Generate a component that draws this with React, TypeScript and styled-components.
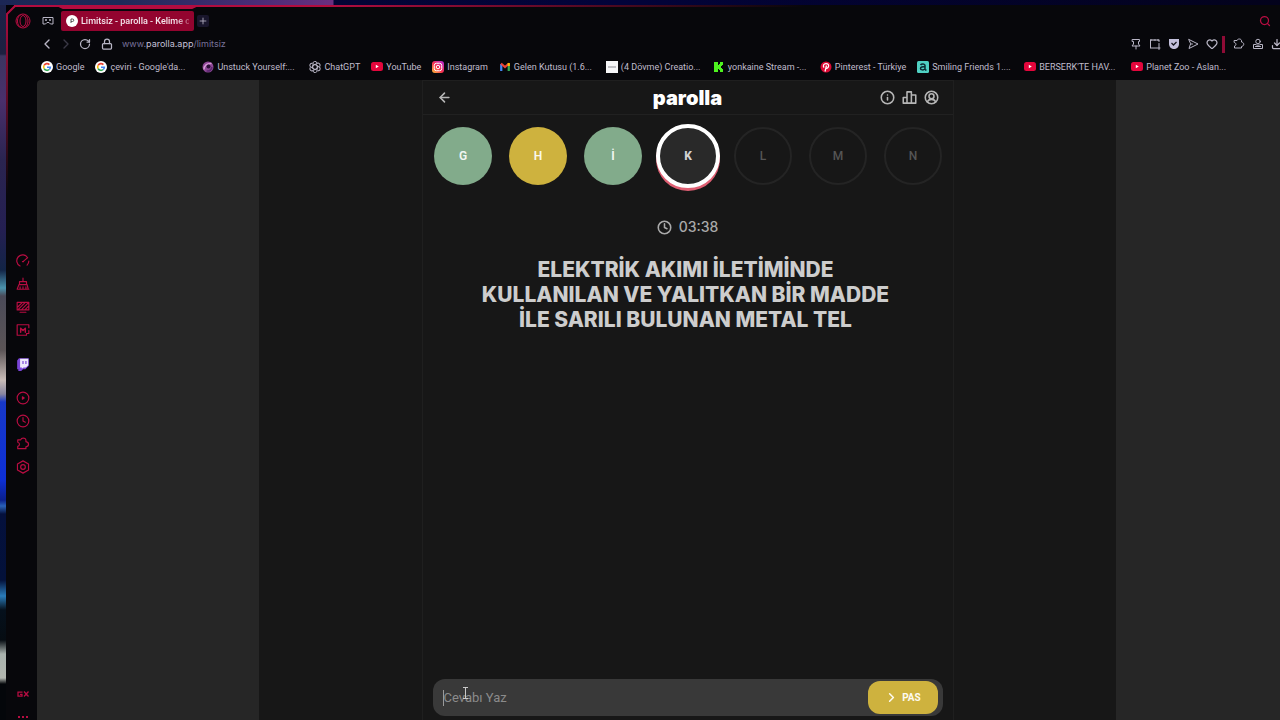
import React from "react";
import styled, { createGlobalStyle, css } from "styled-components";
import {
  ArrowLeft,
  ChevronLeft,
  ChevronRight,
  Clock,
  Download,
  Heart,
  Info,
  Lock,
  Plus,
  RotateCw,
  Search,
} from "lucide-react";

const GlobalStyle = createGlobalStyle`
  *, *::before, *::after { box-sizing: border-box; }
  body {
    margin: 0;
    background: #020208;
    font-family: Inter, Roboto, "Liberation Sans", sans-serif;
  }
  button { border: 0; padding: 0; background: none; color: inherit; font: inherit; cursor: pointer; }
  a { color: inherit; text-decoration: none; }
  svg { display: block; flex: none; }
`;

const Desktop = styled.div`
  display: flex;
  min-height: 100vh;
  padding: 5px 0 0 6px;
  overflow: hidden;
  background:
    linear-gradient(90deg, #1b2655 0, #1d2a58 120px, #4b2c78 260px, #6a2f80 333px, transparent 334px) top / 100% 5px no-repeat,
    linear-gradient(90deg, #04052e 0, #02033a 620px, #03021c 1280px) top / 100% 5px no-repeat,
    linear-gradient(180deg, #1b2148 0, #1d2040 54px, #3b3560 56px, #4a2f6c 100px, #2a2450 160px, #241f52 230px,
      #122446 270px, #4b93ad 288px, #4a4a58 296px, #5b5456 350px, #c9bdb8 380px, #8a86a0 394px, #1738c8 402px,
      #0d2fd6 480px, #0a1f8c 500px, #2a62b8 506px, #04103c 514px, #03113a 580px, #2a7cba 596px, #05101c 610px,
      #060c12 640px, #a9b2ae 654px, #b2b6b0 678px, #04060a 684px) left / 6px 100% no-repeat,
    #020208;
`;

const BrowserWindow = styled.div`
  position: relative;
  display: flex;
  flex: 1;
  min-width: 0;
  background: #07070b;
  clip-path: polygon(0 8px, 8px 0, 100% 0, 100% 100%, 0 100%);
`;

const WindowOutline = styled.svg`
  position: absolute;
  top: 0;
  left: 0;
  width: 100%;
  height: 200px;
  pointer-events: none;
`;

const Sidebar = styled.nav`
  display: flex;
  flex-direction: column;
  align-items: center;
  flex: none;
  width: 31px;
  padding: 8px 0 1px 2px;
  color: #b80d42;
`;

const SidebarPanels = styled.div`
  display: flex;
  flex-direction: column;
  gap: 20px;
  margin-top: 225px;
`;

const SidebarGroup = styled.div`
  display: flex;
  flex-direction: column;
  gap: 9px;
`;

const SidebarFooter = styled.div`
  display: flex;
  flex-direction: column;
  align-items: center;
  gap: 17px;
  margin-top: auto;
`;

const IconButton = styled.button`
  display: flex;
  align-items: center;
  justify-content: center;
`;

const Main = styled.div`
  display: flex;
  flex-direction: column;
  flex: 1;
  min-width: 0;
`;

const TabBar = styled.div`
  display: flex;
  align-items: center;
  height: 26px;
  padding: 6px 9px 0 5px;
  color: #b9b6c6;
`;

const Tab = styled.button`
  display: flex;
  align-items: center;
  gap: 3px;
  width: 133px;
  height: 20px;
  margin: 0 3px 0 7px;
  padding: 0 5px;
  border-radius: 2px;
  background: #93042f;
  color: #f4e6ec;
  font-family: Roboto, Inter, sans-serif;
  font-size: 9px;
  font-weight: 500;
  line-height: 12px;
  text-align: left;
`;

const TabTitle = styled.span`
  flex: 1;
  min-width: 0;
  white-space: nowrap;
  mask-image: linear-gradient(90deg, #000 88%, transparent 105%);
`;

const NewTabButton = styled(IconButton)`
  width: 12px;
  height: 12px;
  border-radius: 2px;
  background: #19162c;
`;

const TabSearch = styled(IconButton)`
  margin-left: auto;
  color: #b80d42;
`;

const AddressBar = styled.div`
  display: flex;
  align-items: center;
  height: 26px;
  margin-right: -3px;
  padding-left: 4px;
  color: #b9b6c6;
`;

const NavButtons = styled.div`
  display: flex;
  align-items: center;
  gap: 7px;
  margin-right: 10px;
`;

const Address = styled.a`
  margin-left: 9px;
  color: #77719a;
  font-size: 9px;
  line-height: 14px;
`;

const AddressHost = styled.span`
  color: #c4c0d8;
`;

const Tools = styled.div<{ $end?: boolean }>`
  display: flex;
  align-items: center;
  gap: 7px;
  margin-left: ${(p) => (p.$end ? "auto" : "0")};
`;

const ToolDivider = styled.span`
  width: 3px;
  height: 17px;
  margin: 0 8px 0 4px;
  background: #8f0b36;
`;

const Bookmarks = styled.div`
  display: flex;
  gap: 11px;
  height: 23px;
  padding: 0 4px 4px;
  overflow: hidden;
`;

const Bookmark = styled.a<{ $wide?: boolean }>`
  display: flex;
  align-items: center;
  flex: none;
  gap: 3px;
  color: #c0bdcd;
  font-family: Roboto, Inter, sans-serif;
  font-size: 9px;
  line-height: 12px;
  white-space: nowrap;
  ${(p) =>
    p.$wide &&
    css`
      width: 96px;
    `}
`;

const Page = styled.div`
  display: grid;
  grid-template-columns: minmax(0, 222fr) minmax(0, 857px) minmax(0, 164fr);
  flex: 1;
  border-top-left-radius: 4px;
  background: #262626;
`;

const Stage = styled.div`
  display: flex;
  justify-content: center;
  grid-column: 2;
  background: #171717;
`;

const Game = styled.main`
  display: flex;
  flex-direction: column;
  width: 532px;
  border: solid #1f1f1f;
  border-width: 1px 1px 0;
`;

const GameHeader = styled.header`
  display: grid;
  grid-template-columns: 1fr auto 1fr;
  align-items: center;
  height: 34px;
  padding: 0 14px;
  border-bottom: 1px solid #212121;
  color: #b5b5b5;
`;

const Brand = styled.h1`
  margin: 0;
  color: #fff;
  font-size: 20px;
  font-weight: 900;
  line-height: 24px;
`;

const BackLink = styled.a`
  justify-self: start;
`;

const HeaderActions = styled.div`
  display: flex;
  justify-content: flex-end;
  gap: 7px;
`;

const Letters = styled.ol`
  display: grid;
  grid-template-columns: repeat(7, 1fr);
  align-items: center;
  justify-items: center;
  margin: 0;
  padding: 9px 2px 0 3px;
  list-style: none;
`;

type LetterState = "correct" | "passed" | "current" | "waiting";

const letterLooks = {
  correct: css`
    background: #82ab8b;
    color: #f3f7f3;
  `,
  passed: css`
    background: #ceb23e;
    color: #fbf8ec;
  `,
  current: css`
    width: 64px;
    height: 64px;
    border: 4px solid #fff;
    background: #292929;
    box-shadow: 0 3px 0 #df5f73;
    color: #d2d2d2;
    font-weight: 800;
  `,
  waiting: css`
    border: 2px solid #242424;
    color: #555;
    font-weight: 500;
  `,
};

const Letter = styled.li<{ $state: LetterState }>`
  display: flex;
  align-items: center;
  justify-content: center;
  width: 58px;
  height: 58px;
  border-radius: 50%;
  font-size: 12px;
  font-family: Roboto, Inter, sans-serif;
  font-weight: 600;
  line-height: 16px;
  ${(p) => letterLooks[p.$state]}
`;

const Timer = styled.div`
  display: flex;
  align-items: center;
  justify-content: center;
  gap: 7px;
  margin-top: 29px;
  color: #a9a9a9;
  font-size: 14px;
  font-weight: 500;
  line-height: 20px;
`;

const Question = styled.h2`
  margin: 20px 0 0;
  padding-right: 4px;
  color: #cdcdcd;
  font-size: 21px;
  font-weight: 800;
  line-height: 25px;
  text-align: center;
  text-transform: uppercase;
`;

const AnswerForm = styled.form`
  display: flex;
  align-items: center;
  height: 37px;
  margin: auto 10px 4px 10px;
  padding: 0 5px 0 10px;
  border-radius: 12px;
  background: #393939;
`;

const Caret = styled.span`
  width: 1px;
  height: 16px;
  background: #9a9a9a;
`;

const AnswerInput = styled.input`
  flex: 1;
  min-width: 0;
  padding: 0;
  border: 0;
  outline: 0;
  background: none;
  color: #ddd;
  font: 400 13px/20px Roboto, Inter, sans-serif;
  &::placeholder {
    color: #8b8b8b;
    opacity: 1;
  }
`;

const PassButton = styled.button`
  display: flex;
  align-items: center;
  justify-content: center;
  gap: 3px;
  width: 70px;
  height: 33px;
  border-radius: 12px;
  background: #ceb23e;
  color: #fdfaf0;
  font-family: Roboto, Inter, sans-serif;
  font-size: 10px;
  font-weight: 700;
  line-height: 16px;
`;

const MousePointer = styled.svg`
  position: absolute;
  left: 455px;
  top: 682px;
`;

type IconProps = { size?: number; children: React.ReactNode; width?: number };

const Line = ({ size = 12, width = 2, children }: IconProps) => (
  <svg width={size} height={size} viewBox="0 0 24 24" fill="none" stroke="currentColor" strokeWidth={width} strokeLinejoin="round" strokeLinecap="round">
    {children}
  </svg>
);

const OperaLogo = () => (
  <svg width="16" height="16" viewBox="0 0 32 32" fill="none" stroke="currentColor" strokeWidth="2">
    <circle cx="16" cy="16" r="14" />
    <ellipse cx="16" cy="16" rx="6" ry="11" />
    <path d="M13 3C7 5 5 10 5 16s2 11 8 13M19 3c4 2 7 7 7 13s-3 11-7 13" />
  </svg>
);

const Speed = () => (
  <Line size={14}>
    <path d="M7 20.500A10 10 0 1 1 20 6.500M12 13l7-6M11 13h2M22 12c0 3-1 5-3 7" />
  </Line>
);
const Cleaner = () => (
  <Line size={14}>
    <path d="M12 2v5M6 8h12v5H6zM5 13l-3 8h19l-2-8M7 17v4M12 17v4M17 17v4M19 21h3" />
  </Line>
);
const Monitor = () => (
  <Line size={14}>
    <path d="M2 4h20v13H2zM7 21h10M3 12l8-8M4 16L16 4M10 16L21 5M16 16l5-5" />
  </Line>
);
const Mods = () => (
  <Line size={14}>
    <path d="M22 8V3H2v18h16M22 13v5h-4v3" />
    <path d="M8 16V9l4 4 4-4v7" strokeWidth="2.500" />
  </Line>
);
const Twitch = () => (
  <svg width="14" height="14" viewBox="0 0 24 24">
    <path d="M5 2h17v13l-6 6h-4l-3 3H4v-3H2V6z" fill="#7a45d8" />
    <path d="M7 3h14v11l-4 4h-4l-3 2v-2H7z" fill="#eee8fb" />
    <path d="M12 7v5M17 7v5" stroke="#7a45d8" strokeWidth="2" />
  </svg>
);
const Player = () => (
  <Line size={14}>
    <circle cx="12" cy="12" r="10" />
    <path d="M11 10l3 2-3 2z" fill="currentColor" />
  </Line>
);
const Cube = ({ size = 14 }: { size?: number }) => (
  <Line size={size}>
    <path d="M3 5h5c1-4 8-4 9 0v3c6 1 6 8 0 9v3H3v-4c4-1 4-6 0-7z" />
  </Line>
);
const Settings = () => (
  <Line size={14}>
    <path d="M12 1.500l9.500 5.500v10L12 22.500 2.500 17V7z" />
    <circle cx="12" cy="12" r="4" />
  </Line>
);
const GxMark = () => (
  <svg width="12" height="8" viewBox="0 0 24 16" fill="none" stroke="currentColor" strokeWidth="2.500">
    <path d="M11 4H2v8h8V8.500H6M14 3l9 10M23 3l-9 10" />
  </svg>
);
const Dots = () => (
  <svg width="12" height="4" viewBox="0 0 12 4" fill="currentColor">
    <rect x="1" y="1" width="2" height="2" />
    <rect x="5" y="1" width="2" height="2" />
    <rect x="9" y="1" width="2" height="2" />
  </svg>
);
const GamePad = () => (
  <svg width="12" height="12" viewBox="0 0 24 24" fill="none" stroke="currentColor" strokeWidth="2">
    <path d="M2 5h20v13h-5l-3-3h-4l-3 3H2z" />
    <path d="M6 10h4M14 10h4" strokeWidth="3" />
  </svg>
);
const TabFavicon = () => (
  <svg width="12" height="12" viewBox="0 0 12 12">
    <circle cx="6" cy="6" r="6" fill="#fff" />
    <path d="M5 8V4h1.500a1.200 1.200 0 0 1 0 2.500H5" fill="none" stroke="#555" />
  </svg>
);
const Pin = () => (
  <Line>
    <path d="M5 3h14v4h-2v5l3 4H4l3-4V7H5zM12 16v6" />
  </Line>
);
const Snapshot = () => (
  <Line>
    <path d="M6 4H3v3M10 4h3M17 4h3v3M20 11v12M3 11v3M3 17v3h19" />
    <path d="M3 4v16M3 4h17" />
  </Line>
);
const Shield = () => (
  <svg width="12" height="12" viewBox="0 0 24 24">
    <path d="M2 2h20v10c0 6-5 10-10 10S2 18 2 12z" fill="#c3c0dc" />
    <path d="M7 10l4 4 6-6" fill="none" stroke="#15141e" strokeWidth="2.500" />
  </svg>
);
const Send = () => (
  <Line>
    <path d="M4 3l18 9-18 9 3-9zM7 12h4" />
  </Line>
);
const Profile = () => (
  <Line>
    <circle cx="12" cy="7" r="4.500" />
    <path d="M7 13H3v8h18v-8h-4M7 13c3 2 7 2 10 0M7 17h10" />
  </Line>
);

const GoogleIcon = () => (
  <svg width="12" height="12" viewBox="0 0 24 24">
    <circle cx="12" cy="12" r="12" fill="#fff" />
    <g fill="none" strokeWidth="3.200">
      <path d="M16.800 7.200A6.700 6.700 0 0 0 6.200 8.700" stroke="#ea4335" />
      <path d="M6.200 8.700a6.700 6.700 0 0 0 0 6.600" stroke="#fbbc05" />
      <path d="M6.200 15.300a6.700 6.700 0 0 0 10.300 1.700" stroke="#34a853" />
      <path d="M16.500 17a6.700 6.700 0 0 0 2.200-4.600H12" stroke="#4285f4" />
    </g>
  </svg>
);
const UnstuckIcon = () => (
  <svg width="12" height="12" viewBox="0 0 24 24">
    <circle cx="12" cy="12" r="11" fill="#8d4796" />
    <path d="M4 17C4 9 10 4 19 5" stroke="#d59bd6" strokeWidth="3" fill="none" />
    <circle cx="13" cy="11" r="4" fill="#2b1038" />
    <path d="M9 20c6 1 10-3 11-8" stroke="#5c2870" strokeWidth="3" fill="none" />
  </svg>
);
const ChatIcon = () => (
  <svg width="12" height="12" viewBox="0 0 24 24" fill="none" stroke="#b9b6c6" strokeWidth="2">
    {[0, 60, 120, 180, 240, 300].map((angle) => (
      <path key={angle} d="M8 9V6a4 4 0 0 1 8-2M8 9l4-2.300 5 3" transform={`rotate(${angle} 12 12)`} />
    ))}
  </svg>
);
const YouTubeIcon = () => (
  <svg width="12" height="12" viewBox="0 0 12 12">
    <rect y="1" width="12" height="9" rx="2.500" fill="#e3063c" />
    <path d="M4.800 3.700v3.600l3-1.800z" fill="#fff" />
  </svg>
);
const InstagramIcon = () => (
  <svg width="12" height="12" viewBox="0 0 24 24">
    <defs>
      <linearGradient id="insta" x1="0" y1="1" x2="1" y2="0">
        <stop offset="0" stopColor="#ffc83c" />
        <stop offset=".45" stopColor="#f7314b" />
        <stop offset="1" stopColor="#b02be0" />
      </linearGradient>
    </defs>
    <rect width="24" height="24" rx="6" fill="url(#insta)" />
    <g fill="none" stroke="#fff" strokeWidth="2">
      <rect x="4.500" y="4.500" width="15" height="15" rx="4.500" />
      <circle cx="12" cy="12" r="3.500" />
    </g>
  </svg>
);
const GmailIcon = () => (
  <svg width="12" height="12" viewBox="0 0 24 24" fill="none" strokeWidth="4.500">
    <path d="M4.500 20V6" stroke="#4285f4" />
    <path d="M19.500 20V6" stroke="#34a853" />
    <path d="M4 5l8 7 8-7" stroke="#ea4335" />
    <path d="M19.500 10V4" stroke="#fbbc05" />
  </svg>
);
const BlankIcon = () => (
  <svg width="12" height="12" viewBox="0 0 12 12">
    <rect width="12" height="12" fill="#f6f6f8" />
    <path d="M2 6h8" stroke="#8b8b92" />
  </svg>
);
const KickIcon = () => (
  <svg width="12" height="12" viewBox="0 0 12 12">
    <path d="M1 1h4v3h1V3h1V1h3v3H9v1H8v2h1v1h1v3H7V9H6V8H5v3H1z" fill="#4ef21f" />
  </svg>
);
const PinterestIcon = () => (
  <svg width="12" height="12" viewBox="0 0 24 24">
    <circle cx="12" cy="12" r="11" fill="#dc0a35" />
    <path d="M10 21l3-12M8 13c-3-4 0-8 4-8s6 3 5 6-4 5-6 3" stroke="#fff" strokeWidth="2.500" fill="none" />
  </svg>
);
const AnimeIcon = () => (
  <svg width="12" height="12" viewBox="0 0 24 24">
    <rect width="24" height="24" rx="3" fill="#4fd0c3" />
    <path d="M7 8c2-3 9-3 9 1v9M16 12c-5-1-9 0-9 3s6 4 9 1M16 18h3" stroke="#0c2b33" strokeWidth="3" fill="none" />
  </svg>
);
const StatsIcon = () => (
  <Line size={15} width={2.5}>
    <path d="M2 12h6v9H2zM8 3h7v18H8zM15 8h7v13h-7z" />
  </Line>
);
const UserIcon = () => (
  <Line size={15} width={2.5}>
    <circle cx="12" cy="12" r="10" />
    <circle cx="12" cy="10" r="4" />
    <path d="M5.500 19c1-3 3-4 6.500-4s5.500 1 6.500 4" />
  </Line>
);

const bookmarks: { label: string; icon: React.ReactNode; wide?: boolean }[] = [
  { label: "Google", icon: <GoogleIcon /> },
  { label: "çeviri - Google'da...", icon: <GoogleIcon />, wide: true },
  { label: "Unstuck Yourself:...", icon: <UnstuckIcon />, wide: true },
  { label: "ChatGPT", icon: <ChatIcon /> },
  { label: "YouTube", icon: <YouTubeIcon /> },
  { label: "Instagram", icon: <InstagramIcon /> },
  { label: "Gelen Kutusu (1.6...", icon: <GmailIcon />, wide: true },
  { label: "(4 Dövme) Creatio...", icon: <BlankIcon />, wide: true },
  { label: "yonkaine Stream -...", icon: <KickIcon />, wide: true },
  { label: "Pinterest - Türkiye", icon: <PinterestIcon /> },
  { label: "Smiling Friends 1....", icon: <AnimeIcon />, wide: true },
  { label: "BERSERK'TE HAV...", icon: <YouTubeIcon />, wide: true },
  { label: "Planet Zoo - Aslan...", icon: <YouTubeIcon />, wide: true },
];

const letters: { char: string; state: LetterState }[] = [
  { char: "G", state: "correct" },
  { char: "H", state: "passed" },
  { char: "İ", state: "correct" },
  { char: "K", state: "current" },
  { char: "L", state: "waiting" },
  { char: "M", state: "waiting" },
  { char: "N", state: "waiting" },
];

export default function App() {
  return (
    <Desktop>
      <GlobalStyle />
      <BrowserWindow>
        <Sidebar aria-label="Kenar çubuğu">
          <IconButton aria-label="Opera GX"><OperaLogo /></IconButton>
          <SidebarPanels>
            <SidebarGroup>
              <IconButton aria-label="GX Control"><Speed /></IconButton>
              <IconButton aria-label="GX Cleaner"><Cleaner /></IconButton>
              <IconButton aria-label="Arka plan"><Monitor /></IconButton>
              <IconButton aria-label="Mods"><Mods /></IconButton>
            </SidebarGroup>
            <IconButton aria-label="Twitch"><Twitch /></IconButton>
            <SidebarGroup>
              <IconButton aria-label="Oynatıcı"><Player /></IconButton>
              <IconButton aria-label="Geçmiş"><Clock size={14} /></IconButton>
              <IconButton aria-label="Uzantılar"><Cube /></IconButton>
              <IconButton aria-label="Ayarlar"><Settings /></IconButton>
            </SidebarGroup>
          </SidebarPanels>
          <SidebarFooter>
            <IconButton aria-label="GX"><GxMark /></IconButton>
            <IconButton aria-label="Daha fazla"><Dots /></IconButton>
          </SidebarFooter>
        </Sidebar>
        <Main>
          <TabBar>
            <IconButton aria-label="GX Corner"><GamePad /></IconButton>
            <Tab>
              <TabFavicon />
              <TabTitle>Limitsiz - parolla - Kelime o</TabTitle>
            </Tab>
            <NewTabButton aria-label="Yeni sekme"><Plus size={10} /></NewTabButton>
            <TabSearch aria-label="Sekmelerde ara"><Search size={12} strokeWidth={2.5} /></TabSearch>
          </TabBar>
          <AddressBar>
            <NavButtons>
              <IconButton aria-label="Geri"><ChevronLeft size={12} viewBox="3 3 18 18" /></IconButton>
              <IconButton aria-label="İleri"><ChevronRight size={12} viewBox="3 3 18 18" color="#3b3946" /></IconButton>
              <IconButton aria-label="Yenile"><RotateCw size={12} strokeWidth={2.5} /></IconButton>
            </NavButtons>
            <Lock size={12} strokeWidth={2.5} />
            <Address href="#limitsiz">
              www.<AddressHost>parolla.app</AddressHost>/limitsiz
            </Address>
            <Tools $end>
              <IconButton aria-label="Sabitle"><Pin /></IconButton>
              <IconButton aria-label="Ekran görüntüsü"><Snapshot /></IconButton>
              <IconButton aria-label="Koruma"><Shield /></IconButton>
              <IconButton aria-label="Gönder"><Send /></IconButton>
              <IconButton aria-label="Favori"><Heart size={12} strokeWidth={2.5} /></IconButton>
            </Tools>
            <ToolDivider />
            <Tools>
              <IconButton aria-label="Uzantılar"><Cube size={12} /></IconButton>
              <IconButton aria-label="Profil"><Profile /></IconButton>
              <IconButton aria-label="İndirilenler"><Download size={12} strokeWidth={2.5} /></IconButton>
            </Tools>
          </AddressBar>
          <Bookmarks>
            {bookmarks.map((b) => (
              <Bookmark key={b.label} href="#bookmark" $wide={b.wide}>
                {b.icon}
                {b.label}
              </Bookmark>
            ))}
          </Bookmarks>
          <Page>
            <Stage>
              <Game>
                <GameHeader>
                  <BackLink href="#back" aria-label="Geri dön">
                    <ArrowLeft size={15} strokeWidth={2.5} />
                  </BackLink>
                  <Brand>parolla</Brand>
                  <HeaderActions>
                    <IconButton aria-label="Nasıl oynanır"><Info size={15} strokeWidth={2.5} /></IconButton>
                    <IconButton aria-label="İstatistikler"><StatsIcon /></IconButton>
                    <IconButton aria-label="Hesap"><UserIcon /></IconButton>
                  </HeaderActions>
                </GameHeader>
                <Letters>
                  {letters.map((l) => (
                    <Letter key={l.char} $state={l.state}>{l.char}</Letter>
                  ))}
                </Letters>
                <Timer>
                  <Clock size={15} strokeWidth={2.5} />
                  03:38
                </Timer>
                <Question>
                  ELEKTRİK AKIMI İLETİMİNDE
                  <br />
                  KULLANILAN VE YALITKAN BİR MADDE
                  <br />
                  İLE SARILI BULUNAN METAL TEL
                </Question>
                <AnswerForm onSubmit={(e) => e.preventDefault()}>
                  <Caret />
                  <AnswerInput aria-label="Cevap" placeholder="Cevabı Yaz" />
                  <PassButton type="button">
                    <ChevronRight size={15} strokeWidth={2.5} />
                    PAS
                  </PassButton>
                </AnswerForm>
              </Game>
            </Stage>
          </Page>
        </Main>
        <WindowOutline fill="none" stroke="#b30c40">
          <defs>
            <linearGradient id="edge" gradientUnits="userSpaceOnUse" x1="0" y1="0" x2="0" y2="190">
              <stop offset="0" stopColor="#b30c40" />
              <stop offset="1" stopColor="#b30c40" stopOpacity="0" />
            </linearGradient>
            <linearGradient id="top" gradientUnits="userSpaceOnUse" x1="0" y1="0" x2="800" y2="0">
              <stop offset=".4" stopColor="#b30c40" />
              <stop offset="1" stopColor="#b30c40" stopOpacity="0" />
            </linearGradient>
          </defs>
          <path d="M1 190V9L9 1" stroke="url(#edge)" strokeWidth="2" />
          <rect x="8" y="0" width="800" height="2" fill="url(#top)" stroke="none" />
          <path d="M53 1l4 2h129l4-2" strokeWidth="2" />
        </WindowOutline>
      </BrowserWindow>
      <MousePointer width="20" height="20" viewBox="0 0 20 20" fill="none" stroke="#c9c9c9">
        <path d="M8 5.500h5M10.500 5.500v11M8 16.500h5" />
      </MousePointer>
    </Desktop>
  );
}
